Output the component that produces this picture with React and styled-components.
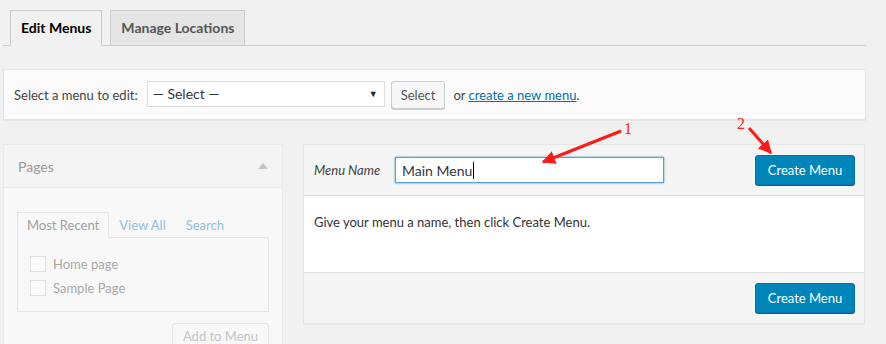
import React from 'react';
import styled, { createGlobalStyle } from 'styled-components'

const GlobalStyle = createGlobalStyle`
body{
    margin:0;
    background:#f1f1f1;
    font-family:Lato, "Liberation Sans", sans-serif;
    font-size:13px;
    color:#444;
    overflow:hidden;
}
`

const Page = styled.div`
position:relative;
width:863px;
padding:10px 0 0 3px;
`

const TabNav = styled.nav`
display:flex;
gap:8px;
padding-left:7px;
border-bottom:1px solid #ccc;
`

const Tab = styled.div`
height:34px;
padding:0 10px;
display:flex;
align-items:center;
border:1px solid #ccc;
margin-bottom:-1px;
font-size:14px;
font-weight:700;
line-height:1;
background:${props => props.active ? '#f1f1f1' : '#e5e5e5'};
color:${props => props.active ? '#000' : '#555'};
border-bottom:1px solid ${props => props.active ? '#f1f1f1' : '#ccc'};
`

const ManageBar = styled.div`
margin-top:23px;
height:49px;
display:flex;
align-items:center;
padding:0 10px;
background:#fbfbfb;
border:1px solid #e5e5e5;
box-shadow:0 1px 1px rgba(0,0,0,.04);
`

const BarLabel = styled.span`
margin-right:9px;
`

const FakeSelect = styled.div`
display:flex;
align-items:center;
justify-content:space-between;
padding:0 6px 0 5px;
box-sizing:border-box;
width:238px;
height:26px;
border:1px solid #ddd;
background:#fff;
color:#32373c;
font-size:14px;
margin-top:-2px;
`

const Caret = styled.span`
font-size:9px;
color:#222;
`

const GreyButton = styled.button`
margin-left:6px;
height:28px;
padding:0 9px;
font-family:inherit;
font-size:13px;
color:#555;
background:#f7f7f7;
border:1px solid #ccc;
border-radius:3px;
box-shadow:0 1px 0 #ccc;
`

const OrText = styled.span`
margin-left:8px;
a{
    color:#0073aa;
}
`

const Columns = styled.div`
display:flex;
gap:20px;
margin-top:24px;
align-items:flex-start;
`

const SidePanel = styled.div`
width:280px;
box-sizing:border-box;
border:1px solid #e9e9e9;
background:#f8f8f8;
height:220px;
overflow:hidden;
`

const SideHeader = styled.div`
height:42px;
display:flex;
align-items:center;
justify-content:space-between;
padding:0 14px;
border-bottom:1px solid #e9e9e9;
background:#f4f4f4;
color:#999;
font-size:14px;
`

const UpArrow = styled.span`
width:0;
height:0;
border-left:5px solid transparent;
border-right:5px solid transparent;
border-bottom:6px solid #c4c4c4;
`

const SideBody = styled.div`
padding:24px 13px 0 13px;
`

const InnerTabs = styled.div`
display:flex;
`

const InnerTab = styled.div`
height:24px;
padding:0 9px;
display:flex;
align-items:center;
color:${props => props.active ? '#a0a0a0' : '#8fc1da'};
border:1px solid ${props => props.active ? '#e6e6e6' : 'transparent'};
border-bottom:${props => props.active ? '1px solid #f8f8f8' : 'none'};
margin-bottom:-1px;
position:relative;
`

const ListBox = styled.div`
height:75px;
border:1px solid #e6e6e6;
padding:18px 12px 0;
box-sizing:border-box;
display:flex;
flex-direction:column;
gap:8px;
`

const CheckRow = styled.label`
display:flex;
align-items:center;
gap:7px;
color:#a9a9a9;
`

const Check = styled.span`
width:14px;
height:14px;
border:1px solid #e2e2e2;
background:#fbfbfb;
`

const SideFooter = styled.div`
display:flex;
justify-content:flex-end;
margin-top:11px;
`

const FadedButton = styled.div`
width:97px;
height:26px;
box-sizing:border-box;
border:1px solid #e4e4e4;
border-radius:3px;
background:#f8f8f8;
color:#c4c4c4;
display:flex;
align-items:center;
justify-content:center;
font-size:13px;
`

const MenuPanel = styled.div`
width:562px;
box-sizing:border-box;
border:1px solid #e5e5e5;
background:#fff;
box-shadow:0 1px 1px rgba(0,0,0,.04);
`

const MenuHeader = styled.div`
height:50px;
display:flex;
align-items:center;
padding:0 9px 0 10px;
background:#f5f5f5;
border-bottom:1px solid #dedede;
`

const NameLabel = styled.span`
font-style:italic;
color:#444;
width:81px;
`

const NameInput = styled.div`
width:269px;
height:26px;
box-sizing:border-box;
border:1px solid #5b9dd9;
box-shadow:0 0 2px rgba(30,140,190,.8);
background:#fff;
display:flex;
align-items:center;
padding-left:6px;
font-size:14px;
color:#32373c;
`

const Cursor = styled.span`
display:inline-block;
width:1px;
height:17px;
background:#000;
margin-left:1px;
`

const BlueButton = styled.button`
margin-left:auto;
width:100px;
height:30px;
font-family:inherit;
font-size:13px;
color:#fff;
background:#0085ba;
border:1px solid #0073aa;
border-radius:3px;
box-shadow:0 1px 0 #006799;
`

const MenuBody = styled.div`
height:76px;
padding:18px 10px 0;
box-sizing:border-box;
color:#333;
`

const MenuFooter = styled.div`
height:50px;
display:flex;
align-items:center;
padding:0 9px 0 10px;
background:#f5f5f5;
border-top:1px solid #dedede;
`

const Annotations = styled.svg`
position:absolute;
left:0;
top:0;
pointer-events:none;
`

const Mark = styled.text`
fill:#ff1a1a;
font-family:"Liberation Serif", serif;
font-size:16px;
`

export default function App() {
    return(
        <Page>
            <GlobalStyle />
            <TabNav>
                <Tab active>Edit Menus</Tab>
                <Tab>Manage Locations</Tab>
            </TabNav>

            <ManageBar>
                <BarLabel>Select a menu to edit:</BarLabel>
                <FakeSelect>
                    <span>— Select —</span>
                    <Caret>▼</Caret>
                </FakeSelect>
                <GreyButton>Select</GreyButton>
                <OrText>or <a href='#'>create a new menu</a>.</OrText>
            </ManageBar>

            <Columns>
                <SidePanel>
                    <SideHeader>
                        <span>Pages</span>
                        <UpArrow />
                    </SideHeader>
                    <SideBody>
                        <InnerTabs>
                            <InnerTab active>Most Recent</InnerTab>
                            <InnerTab>View All</InnerTab>
                            <InnerTab>Search</InnerTab>
                        </InnerTabs>
                        <ListBox>
                            <CheckRow><Check />Home page</CheckRow>
                            <CheckRow><Check />Sample Page</CheckRow>
                        </ListBox>
                        <SideFooter>
                            <FadedButton>Add to Menu</FadedButton>
                        </SideFooter>
                    </SideBody>
                </SidePanel>

                <MenuPanel>
                    <MenuHeader>
                        <NameLabel>Menu Name</NameLabel>
                        <NameInput>Main Menu<Cursor /></NameInput>
                        <BlueButton>Create Menu</BlueButton>
                    </MenuHeader>
                    <MenuBody>Give your menu a name, then click Create Menu.</MenuBody>
                    <MenuFooter>
                        <BlueButton>Create Menu</BlueButton>
                    </MenuFooter>
                </MenuPanel>
            </Columns>

            <Annotations width='886' height='344' viewBox='0 0 886 344'>
                <defs>
                    <marker id='head' viewBox='0 0 10 10' refX='9' refY='5' markerWidth='4.5' markerHeight='4.5' orient='auto'>
                        <path d='M0 0 L10 5 L0 10 z' fill='#ff1a1a' />
                    </marker>
                </defs>
                <line x1='621' y1='131' x2='543' y2='162' stroke='#ff1a1a' strokeWidth='3' markerEnd='url(#head)' />
                <line x1='749' y1='128' x2='771' y2='153' stroke='#ff1a1a' strokeWidth='3' markerEnd='url(#head)' />
                <Mark x='624' y='134'>1</Mark>
                <Mark x='737' y='129'>2</Mark>
            </Annotations>
        </Page>
    )
}
